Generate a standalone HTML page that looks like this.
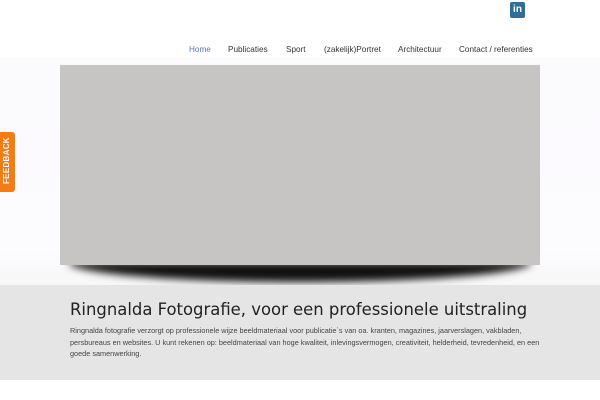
<!DOCTYPE html>
<html><head><style>
*{margin:0;padding:0;box-sizing:border-box}
body{width:600px;height:400px;background:#fff;font-family:"Liberation Sans",sans-serif;position:relative;overflow:hidden}
.in{position:absolute;left:510px;top:2px;width:15px;height:16px;background:#2f6e99;border-radius:2px;color:#fff;font:bold 10px "Liberation Sans",sans-serif;text-align:center;line-height:16px}
.nav{position:absolute;top:45px;font-size:8.2px;color:#333}
.nav span{position:absolute;white-space:nowrap}
.hero{position:absolute;left:0;top:58px;width:600px;height:227px;background:linear-gradient(#fbfafd,#fcfbfe 85%,#f7f7f7)}
.img{position:absolute;left:60px;top:65px;width:480px;height:200px;background:#c6c5c3}
.sh{position:absolute;left:68px;top:262px;width:464px;height:20px;background:#111;border-radius:50%/0 0 100% 100%;filter:blur(4px)}
.band{position:absolute;left:0;top:285px;width:600px;height:95px;background:#e5e5e5}
h1{position:absolute;left:70px;top:300px;font:16.45px "DejaVu Sans",sans-serif;color:#222;white-space:nowrap}
p{position:absolute;left:70px;top:325px;width:470px;font-size:7.3px;line-height:11.6px;color:#444}
.fb{position:absolute;left:0;top:132px;width:15px;height:60px;background:#f57b12;border-radius:0 3px 3px 0}
.fb span{position:absolute;left:1px;top:52px;transform:rotate(-90deg);transform-origin:0 0;color:#fff;font:bold 8px "Liberation Sans",sans-serif;line-height:12px;letter-spacing:0.3px}
</style></head><body>
<div class="in">in</div>
<div class="nav">
<span style="left:189px;color:#5577bb">Home</span>
<span style="left:228px">Publicaties</span>
<span style="left:286px">Sport</span>
<span style="left:324px">(zakelijk)Portret</span>
<span style="left:398px">Architectuur</span>
<span style="left:459px">Contact / referenties</span>
</div>
<div class="hero"></div>
<div class="sh"></div>
<div class="img"></div>
<div class="band"></div>
<h1>Ringnalda Fotografie, voor een professionele uitstraling</h1>
<p>Ringnalda fotografie verzorgt op professionele wijze beeldmateriaal voor publicatie`s van oa. kranten, magazines, jaarverslagen, vakbladen, persbureaus en websites. U kunt rekenen op: beeldmateriaal van hoge kwaliteit, inlevingsvermogen, creativiteit, helderheid, tevredenheid, en een goede samenwerking.</p>
<div class="fb"><span>FEEDBACK</span></div>
</body></html>
